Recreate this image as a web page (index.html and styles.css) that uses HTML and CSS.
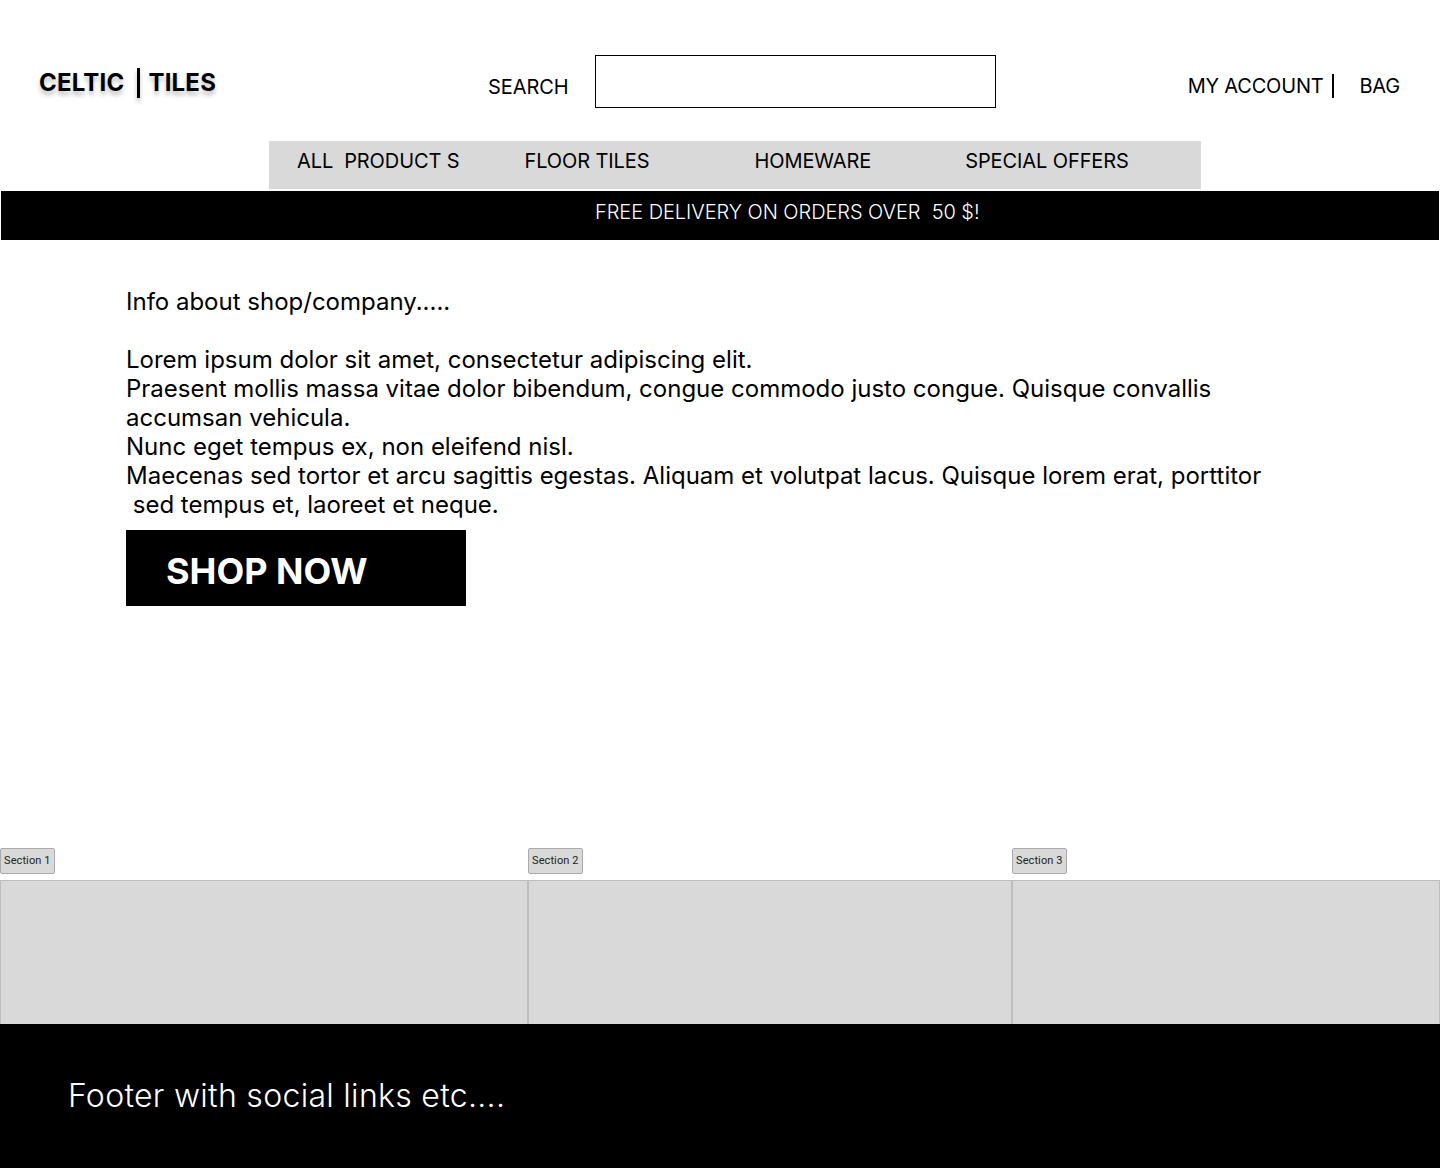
FILE: index.html
```html
<!DOCTYPE html>
<html lang="en">
<head>
<meta charset="utf-8">
<title>Celtic Tiles</title>
<link rel="stylesheet" href="styles.css">
</head>
<body>
<header class="topbar">
  <div class="logo"><span>CELTIC</span><span class="logo-sep"></span><span>TILES</span></div>
  <div class="search">
    <span class="search-label">SEARCH</span>
    <div class="search-box"></div>
  </div>
  <div class="account">
    <span>MY ACCOUNT</span><span class="acc-sep"></span><span class="bag">BAG</span>
  </div>
</header>
<nav class="mainnav">
  <span class="nav-item n1">ALL&nbsp; PRODUCT S</span>
  <span class="nav-item n2">FLOOR TILES</span>
  <span class="nav-item n3">HOMEWARE</span>
  <span class="nav-item n4">SPECIAL OFFERS</span>
</nav>
<div class="promo">FREE DELIVERY ON ORDERS OVER&nbsp; 50 $!</div>
<main class="intro">
  <p class="intro-text">Info about shop/company.....<br><br>Lorem ipsum dolor sit amet, consectetur adipiscing elit.<br>Praesent mollis massa vitae dolor bibendum, congue commodo justo congue. Quisque convallis accumsan vehicula.<br>Nunc eget tempus ex, non eleifend nisl.<br>Maecenas sed tortor et arcu sagittis egestas. Aliquam et volutpat lacus. Quisque lorem erat, porttitor &nbsp;sed tempus et, laoreet et neque.</p>
  <a class="shop-btn">SHOP NOW</a>
</main>
<section class="sections">
  <div class="sec"><span class="sec-label">Section 1</span><div class="sec-box"></div></div>
  <div class="sec"><span class="sec-label">Section 2</span><div class="sec-box"></div></div>
  <div class="sec"><span class="sec-label">Section 3</span><div class="sec-box"></div></div>
</section>
<footer class="footer">Footer with social links etc....</footer>
</body>
</html>
```
FILE: styles.css
```css
* { box-sizing: border-box; }
body {
  margin: 0;
  font-family: Inter, "Noto Sans", sans-serif;
  color: #000;
  background: #fff;
}
.topbar {
  display: flex;
  align-items: center;
  height: 52px;
  margin-top: 55px;
  padding: 0 40px 0 39px;
}
.logo {
  display: flex;
  align-items: center;
  font-weight: 700;
  font-size: 24px;
  letter-spacing: 0.2px;
  text-shadow: 0 4px 4px rgba(0,0,0,0.25);
  margin-top: 2px;
}
.logo-sep {
  width: 3px;
  height: 30px;
  background: #000;
  margin: 0 8px 0 13px;
  box-shadow: 0 4px 4px rgba(0,0,0,0.25);
  position: relative;
  top: 1px;
}
.search {
  display: flex;
  align-items: center;
  margin-left: 272px;
}
.search-label {
  font-size: 20px;
  letter-spacing: -0.1px;
  margin-top: 12px;
}
.search-box {
  width: 401px;
  height: 53px;
  border: 1px solid #000;
  margin-left: 27px;
}
.account {
  display: flex;
  align-items: center;
  margin-left: auto;
  font-size: 20px;
  letter-spacing: -0.2px;
  margin-top: 10px;
}
.acc-sep {
  width: 2px;
  height: 24px;
  background: #000;
  margin: 0 0 0 9px;
}
.bag { margin-left: 25px; }
.mainnav {
  display: flex;
  align-items: center;
  margin: 34px 0 0 269px;
  width: 932px;
  height: 48px;
  background: #d9d9d9;
  font-size: 20px;
  letter-spacing: -0.1px;
  padding-bottom: 9px;
}
.nav-item { white-space: pre; }
.n1 { margin-left: 28px; }
.n2 { margin-left: 65px; }
.n3 { margin-left: 105px; }
.n4 { margin-left: 94px; }
.promo {
  margin: 2px 1px 0 1px;
  height: 49px;
  background: #000;
  color: #fff;
  font-size: 20px;
  font-weight: 300;
  letter-spacing: -0.05px;
  padding: 9px 0 0 594px;
}
.intro {
  padding: 47px 0 0 126px;
}
.intro-text {
  margin: 0;
  width: 1160px;
  font-size: 24px;
  line-height: 29px;
}
.shop-btn {
  display: flex;
  align-items: center;
  margin-top: 11px;
  width: 340px;
  height: 76px;
  background: #000;
  color: #fff;
  font-weight: 700;
  font-size: 36px;
  padding: 6px 0 0 40px;
}
.sections {
  display: grid;
  grid-template-columns: 528px 484px 428px;
  margin-top: 242px;
}
.sec { display: flex; flex-direction: column; align-items: flex-start; }
.sec-label {
  height: 26px;
  padding: 0 3px 1px 3px;
  display: flex;
  align-items: center;
  background: #d9d9d9;
  border: 1px solid #aaa;
  border-radius: 2px;
  font-family: Roboto, "Noto Sans", sans-serif;
  font-size: 11px;
  letter-spacing: 0.1px;
  color: #222;
}
.sec-box {
  margin-top: 6px;
  width: 100%;
  height: 144px;
  background: #d9d9d9;
  border: 1px solid #bdbdbd;
  border-bottom: none;
}
.footer {
  height: 144px;
  background: #000;
  color: #fff;
  font-size: 32px;
  font-weight: 300;
  letter-spacing: 0.3px;
  padding: 52px 0 0 68px;
}
```
